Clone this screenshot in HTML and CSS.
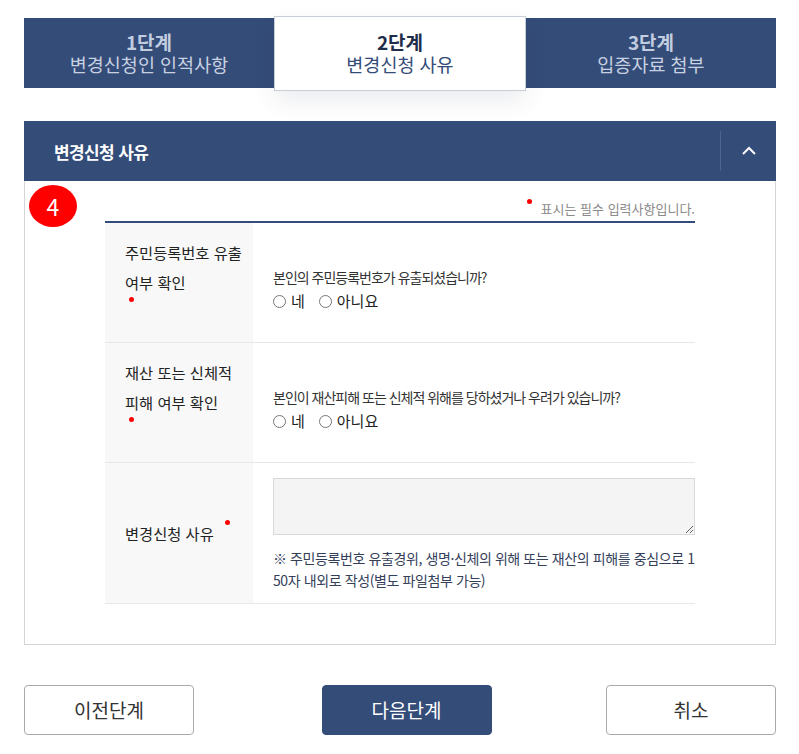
FILE: index.html
```html
<!DOCTYPE html>
<html lang="ko">
<head>
<meta charset="utf-8">
<title>변경신청 사유</title>
<link rel="stylesheet" href="styles.css">
</head>
<body>
<div class="page">
  <div class="steps">
    <div class="step">
      <div class="step-num">1단계</div>
      <div class="step-name">변경신청인 인적사항</div>
    </div>
    <div class="step active">
      <div class="step-num">2단계</div>
      <div class="step-name">변경신청 사유</div>
    </div>
    <div class="step">
      <div class="step-num">3단계</div>
      <div class="step-name">입증자료 첨부</div>
    </div>
  </div>

  <section class="panel">
    <header class="panel-head">
      <h2 class="panel-title">변경신청 사유</h2>
      <button class="panel-toggle" type="button" aria-label="접기">
        <svg width="16" height="10" viewBox="0 0 16 10"><polyline points="2,8 8,2 14,8" fill="none" stroke="#fff" stroke-width="2"/></svg>
      </button>
    </header>
    <div class="panel-body">
      <span class="badge">4</span>
      <p class="notice"><span class="req-dot notice-dot"></span>표시는 필수 입력사항입니다.</p>
      <table class="form-table">
        <tr>
          <th class="row-q">
            <span class="label">주민등록번호 유출 여부 확인</span>
            <span class="req-line"><span class="req-dot"></span></span>
          </th>
          <td class="cell-q">
            <p class="question">본인의 주민등록번호가 유출되셨습니까?</p>
            <div class="radios">
              <label class="radio"><input type="radio" name="q1"> 네</label>
              <label class="radio"><input type="radio" name="q1"> 아니요</label>
            </div>
          </td>
        </tr>
        <tr>
          <th class="row-q">
            <span class="label">재산 또는 신체적 피해 여부 확인</span>
            <span class="req-line"><span class="req-dot"></span></span>
          </th>
          <td class="cell-q">
            <p class="question">본인이 재산피해 또는 신체적 위해를 당하셨거나 우려가 있습니까?</p>
            <div class="radios">
              <label class="radio"><input type="radio" name="q2"> 네</label>
              <label class="radio"><input type="radio" name="q2"> 아니요</label>
            </div>
          </td>
        </tr>
        <tr>
          <th class="row-r">
            <span class="label">변경신청 사유</span><span class="req-dot inline-dot"></span>
          </th>
          <td class="cell-r">
            <textarea class="reason"></textarea>
            <p class="hint">※ 주민등록번호 유출경위, 생명·신체의 위해 또는 재산의 피해를 중심으로 150자 내외로 작성(별도 파일첨부 가능)</p>
          </td>
        </tr>
      </table>
    </div>
  </section>

  <div class="actions">
    <button class="btn" type="button">이전단계</button>
    <button class="btn btn-primary" type="button">다음단계</button>
    <button class="btn" type="button">취소</button>
  </div>
</div>
</body>
</html>
```

FILE: styles.css
```css
* { box-sizing: border-box; }

body {
  margin: 0;
  background: #fff;
  font-family: "Noto Sans CJK KR", "Noto Sans", sans-serif;
  color: #333;
}

.page {
  width: 799px;
  padding: 18px 23px 0 24px;
}

/* steps */
.steps {
  display: flex;
  align-items: center;
  height: 70px;
}

.step {
  flex: 1;
  height: 70px;
  background: #344c78;
  display: flex;
  flex-direction: column;
  justify-content: center;
  align-items: center;
  color: #c3cde0;
}

.step-num {
  font-size: 19px;
  font-weight: 700;
  line-height: 23px;
}

.step-name {
  font-size: 18.5px;
  line-height: 23px;
  color: #c8d1e2;
}

.step.active {
  height: 75px;
  background: #fff;
  border: 1px solid #c8cdda;
  box-shadow: 0 10px 22px rgba(40, 50, 80, 0.09);
  position: relative;
  z-index: 1;
}

.step.active .step-num { color: #1e2d4a; }
.step.active .step-name { color: #344c78; }

/* panel */
.panel {
  margin-top: 33px;
}

.panel-head {
  height: 60px;
  background: #344c78;
  display: flex;
  align-items: center;
  justify-content: space-between;
  padding-left: 30px;
}

.panel-title {
  margin: 0;
  color: #fff;
  font-size: 17px;
  font-weight: 700;
  letter-spacing: -0.6px;
}

.panel-toggle {
  width: 56px;
  height: 40px;
  border: 0;
  border-left: 1px solid rgba(255, 255, 255, 0.14);
  background: transparent;
  display: flex;
  align-items: center;
  justify-content: center;
  padding: 0;
}

.panel-body {
  position: relative;
  border: 1px solid #d5d5d5;
  border-top: 0;
  padding: 16px 80px 40px;
}

.badge {
  position: absolute;
  left: 4px;
  top: 4px;
  width: 48px;
  height: 42px;
  border-radius: 50%;
  background: #ff0000;
  color: #fff;
  font-size: 23px;
  line-height: 42px;
  text-align: center;
}

.notice {
  margin: 0;
  text-align: right;
  font-size: 13px;
  line-height: 24px;
  color: #8a8a8a;
}

.req-dot {
  display: inline-block;
  width: 5px;
  height: 5px;
  border-radius: 50%;
  background: #ff0000;
}

.notice-dot {
  vertical-align: top;
  margin-top: 2px;
  margin-right: 9px;
}

/* table */
.form-table {
  width: 100%;
  border-collapse: collapse;
  border-top: 2px solid #344c78;
}

.form-table tr {
  border-bottom: 1px solid #e8e8e8;
}

.form-table th {
  width: 148px;
  background: #f8f8f8;
  text-align: left;
  font-weight: 400;
  font-size: 15.3px;
  color: #222;
  padding: 0 8px 0 20px;
  vertical-align: middle;
}

.row-q {
  height: 120px;
  line-height: 30px;
}

.row-r {
  height: 140px;
  line-height: 30px;
}

.label { display: inline; }

.req-line {
  display: block;
  height: 30px;
  padding-left: 4px;
}

.req-line .req-dot {
  vertical-align: top;
  margin-top: 0;
}

.inline-dot {
  vertical-align: top;
  margin-left: 11px;
  margin-top: 2px;
}

.form-table td {
  padding: 0 0 0 20px;
  vertical-align: middle;
}

.cell-q {
  padding-top: 14px !important;
}

.question {
  margin: 0;
  font-size: 14px;
  letter-spacing: -1px;
  line-height: 23px;
  color: #333;
}

.radios {
  display: flex;
  gap: 14px;
  font-size: 15px;
  line-height: 23px;
  color: #222;
}

.radio {
  display: flex;
  align-items: center;
  gap: 5px;
}

.radio input {
  appearance: none;
  -webkit-appearance: none;
  margin: 2px 0 0;
  width: 13px;
  height: 13px;
  border: 1px solid #777;
  border-radius: 50%;
  background: #fff;
}

.cell-r {
  padding-top: 15px !important;
  padding-bottom: 12px !important;
  vertical-align: top !important;
}

.reason {
  display: block;
  width: 422px;
  height: 57px;
  background: #f4f4f4;
  border: 1px solid #d9d9d9;
  resize: vertical;
  margin: 0;
}

.hint {
  margin: 12px 0 0;
  font-size: 14px;
  letter-spacing: -0.4px;
  line-height: 22px;
  color: #34405a;
  word-break: break-all;
}

/* actions */
.actions {
  margin-top: 40px;
  display: flex;
  justify-content: space-between;
}

.btn {
  width: 170px;
  height: 50px;
  border: 1px solid #aaa;
  border-radius: 4px;
  background: #fff;
  font-family: "Noto Sans CJK KR", "Noto Sans", sans-serif;
  font-size: 19px;
  color: #333;
}

.btn-primary {
  background: #344c78;
  border-color: #344c78;
  color: #fff;
  margin-left: 13px;
}
```
